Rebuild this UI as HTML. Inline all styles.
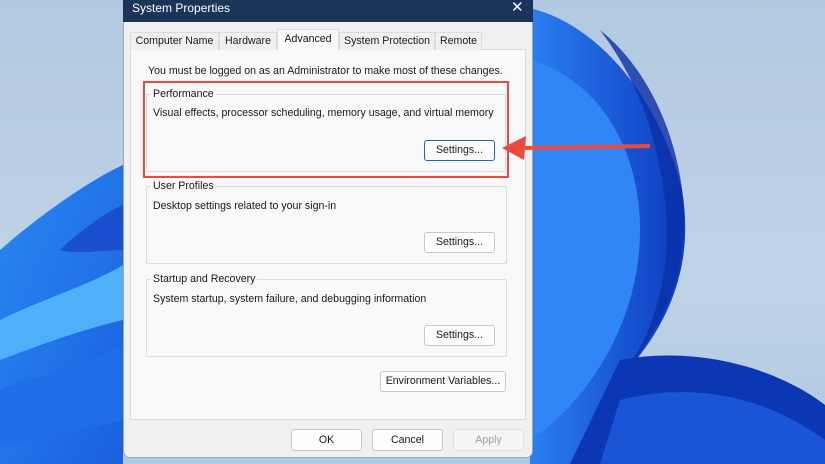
<!DOCTYPE html>
<html><head><meta charset="utf-8"><style>
*{margin:0;padding:0;box-sizing:border-box}
body{width:825px;height:464px;overflow:hidden;position:relative;font-family:"Liberation Sans",sans-serif;background:#b9cde0}
.a{position:absolute}
.t{position:absolute;font-size:10.6px;color:#1a1a1a;white-space:nowrap}
.btn{position:absolute;background:#fdfdfd;border:1px solid #c8c8c8;border-radius:3px;font-size:10.6px;color:#1a1a1a;text-align:center;line-height:19px}
.grp{position:absolute;border:1px solid #dcdcdc;border-radius:2px}
.lg{position:absolute;background:#f9f9f9;padding:0 2px;font-size:10.6px;color:#1a1a1a;line-height:12px}
.tab{position:absolute;top:32px;height:18px;border:1px solid #dcdcdc;border-bottom:none;background:#f0f0f0;font-size:10.6px;color:#1a1a1a;text-align:center;line-height:17px}
</style></head><body>
<svg class="a" style="left:0;top:0" width="825" height="464">
<defs>
<linearGradient id="bg" x1="0" y1="0" x2="0" y2="1"><stop offset="0" stop-color="#b3c9df"/><stop offset="0.6" stop-color="#bfd3e6"/><stop offset="1" stop-color="#b0c8e0"/></linearGradient>
<linearGradient id="r1" x1="0" y1="0" x2="1" y2="0"><stop offset="0" stop-color="#2b7ef2"/><stop offset="1" stop-color="#0c3bbf"/></linearGradient>
<linearGradient id="l1" x1="0" y1="0" x2="1" y2="1"><stop offset="0" stop-color="#2a88f0"/><stop offset="1" stop-color="#1a5fe0"/></linearGradient>
</defs>
<rect width="825" height="464" fill="url(#bg)"/>
<path d="M530 8 C600 25 660 100 682 190 C692 250 680 310 628 370 L600 464 L530 464Z" fill="url(#r1)"/>
<path d="M530 60 C600 80 640 150 640 230 C640 320 590 400 530 440Z" fill="#2f86f4"/>
<path d="M600 30 C650 70 680 140 684 210 C686 280 660 330 628 368 C660 320 672 260 665 200 C655 120 630 70 600 30Z" fill="#0a2fa8" opacity="0.8"/>
<path d="M620 360 C700 345 780 370 825 405 L825 464 L570 464Z" fill="#0b36b4"/>
<path d="M620 400 C700 380 770 400 825 440 L825 464 L600 464Z" fill="#1a55d8"/>
<path d="M0 250 C40 215 90 180 123 165 L123 464 L0 464Z" fill="url(#l1)"/>
<path d="M0 320 C40 300 90 285 123 265 L123 320 C80 330 40 345 0 360Z" fill="#4eb0f8"/>
<path d="M0 390 C40 375 90 365 123 345 L123 420 C80 430 40 440 0 445Z" fill="#1f6ee8"/>
<path d="M60 250 C80 230 110 210 123 205 L123 250 C100 250 80 255 60 250Z" fill="#1a4fd0"/>
</svg>
<div class="a" style="left:123px;top:0;width:410px;height:458px;background:#f0f0f0;border-radius:0 0 7px 7px;border:1px solid #9aa;border-top:none"></div>
<div class="a" style="left:123px;top:0;width:410px;height:22px;background:#1b3558"></div>
<div class="t" style="left:132px;top:1px;color:#fff;font-size:12px;line-height:14px">System Properties</div>
<div class="t" style="left:511px;top:-2px;color:#fff;font-size:15px">✕</div>
<div class="a" style="left:130px;top:49px;width:396px;height:371px;background:#f9f9f9;border:1px solid #dcdcdc"></div>
<div class="tab" style="left:130px;width:89px">Computer Name</div>
<div class="tab" style="left:219px;width:58px">Hardware</div>
<div class="tab" style="left:277px;top:29px;height:21px;width:62px;background:#f9f9f9;line-height:18px">Advanced</div>
<div class="tab" style="left:339px;width:96px">System Protection</div>
<div class="tab" style="left:435px;width:47px">Remote</div>
<div class="t" style="left:148px;top:65px">You must be logged on as an Administrator to make most of these changes.</div>
<div class="grp" style="left:146px;top:94px;width:360px;height:78px"></div>
<div class="lg" style="left:151px;top:88px">Performance</div>
<div class="t" style="left:153px;top:107px">Visual effects, processor scheduling, memory usage, and virtual memory</div>
<div class="btn" style="left:424px;top:140px;width:71px;height:21px;border:1px solid #1a68c0">Settings...</div>
<div class="a" style="left:143px;top:81px;width:366px;height:97px;border:2px solid #ec4a40"></div>
<div class="grp" style="left:146px;top:186px;width:361px;height:78px"></div>
<div class="lg" style="left:151px;top:180px">User Profiles</div>
<div class="t" style="left:153px;top:200px">Desktop settings related to your sign-in</div>
<div class="btn" style="left:424px;top:232px;width:71px;height:21px">Settings...</div>
<div class="grp" style="left:146px;top:279px;width:361px;height:78px"></div>
<div class="lg" style="left:151px;top:273px">Startup and Recovery</div>
<div class="t" style="left:153px;top:293px">System startup, system failure, and debugging information</div>
<div class="btn" style="left:424px;top:325px;width:71px;height:21px">Settings...</div>
<div class="btn" style="left:380px;top:371px;width:126px;height:21px">Environment Variables...</div>
<div class="btn" style="left:291px;top:429px;width:71px;height:22px;line-height:20px">OK</div>
<div class="btn" style="left:372px;top:429px;width:71px;height:22px;line-height:20px">Cancel</div>
<div class="btn" style="left:453px;top:429px;width:71px;height:22px;line-height:20px;color:#a0a0a0;background:#f5f5f5;border-color:#e0e0e0">Apply</div>
<svg class="a" style="left:0;top:0" width="825" height="464">
<line x1="650" y1="146" x2="522" y2="148" stroke="#ec4a40" stroke-width="4"/>
<polygon points="502,148 526,136 524,160" fill="#ec4a40"/>
</svg>
</body></html>
